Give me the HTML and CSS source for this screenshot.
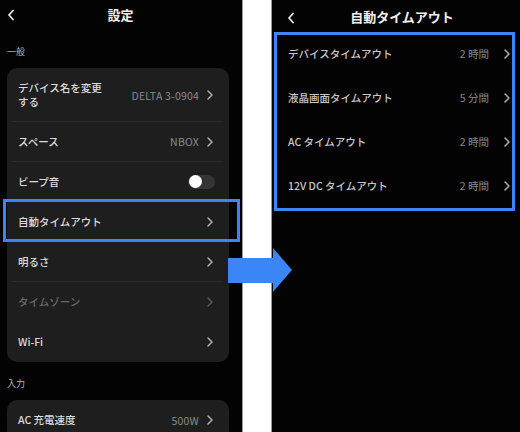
FILE: index.html
```html
<!DOCTYPE html>
<html lang="ja">
<head>
<meta charset="utf-8">
<link rel="stylesheet" href="styles.css">
</head>
<body>
<div class="stage">
  <div class="phone left">
    <header class="bar">
      <svg class="back" width="8" height="12" viewBox="0 0 8 12"><path d="M6 1.5 L2 6 L6 10.5" fill="none" stroke="#e8e8e8" stroke-width="1.8" stroke-linecap="round" stroke-linejoin="round"/></svg>
      <h1 class="title">設定</h1>
    </header>
    <div class="section-label">一般</div>
    <div class="card">
      <div class="row tall"><span class="label">デバイス名を変更<br>する</span><span class="value">DELTA 3-0904</span><svg class="chev" width="6" height="10" viewBox="0 0 6 10"><path d="M1 1 L5 5 L1 9" fill="none" stroke="#b0b0b0" stroke-width="1.5" stroke-linecap="round" stroke-linejoin="round"/></svg></div>
      <div class="row"><span class="label">スペース</span><span class="value">NBOX</span><svg class="chev" width="6" height="10" viewBox="0 0 6 10"><path d="M1 1 L5 5 L1 9" fill="none" stroke="#b0b0b0" stroke-width="1.5" stroke-linecap="round" stroke-linejoin="round"/></svg></div>
      <div class="row"><span class="label">ビープ音</span><span class="toggle"><span class="knob"></span></span></div>
      <div class="row"><span class="label">自動タイムアウト</span><svg class="chev" width="6" height="10" viewBox="0 0 6 10"><path d="M1 1 L5 5 L1 9" fill="none" stroke="#b0b0b0" stroke-width="1.5" stroke-linecap="round" stroke-linejoin="round"/></svg></div>
      <div class="row"><span class="label">明るさ</span><svg class="chev" width="6" height="10" viewBox="0 0 6 10"><path d="M1 1 L5 5 L1 9" fill="none" stroke="#b0b0b0" stroke-width="1.5" stroke-linecap="round" stroke-linejoin="round"/></svg></div>
      <div class="row dim nosep"><span class="label">タイムゾーン</span><svg class="chev" width="6" height="10" viewBox="0 0 6 10"><path d="M1 1 L5 5 L1 9" fill="none" stroke="#5a5a5a" stroke-width="1.5" stroke-linecap="round" stroke-linejoin="round"/></svg></div>
      <div class="row nosep"><span class="label">Wi-Fi</span><svg class="chev" width="6" height="10" viewBox="0 0 6 10"><path d="M1 1 L5 5 L1 9" fill="none" stroke="#b0b0b0" stroke-width="1.5" stroke-linecap="round" stroke-linejoin="round"/></svg></div>
    </div>
    <div class="section-label">入力</div>
    <div class="card">
      <div class="row nosep"><span class="label">AC 充電速度</span><span class="value">500W</span><svg class="chev" width="6" height="10" viewBox="0 0 6 10"><path d="M1 1 L5 5 L1 9" fill="none" stroke="#b0b0b0" stroke-width="1.5" stroke-linecap="round" stroke-linejoin="round"/></svg></div>
    </div>
    <div class="highlight"></div>
  </div>

  <div class="gap"></div>

  <div class="phone right">
    <header class="bar rbar">
      <svg class="back" width="8" height="12" viewBox="0 0 8 12"><path d="M6 1.5 L2 6 L6 10.5" fill="none" stroke="#e8e8e8" stroke-width="1.8" stroke-linecap="round" stroke-linejoin="round"/></svg>
      <h1 class="title">自動タイムアウト</h1>
    </header>
    <div class="timeout-list">
      <div class="trow"><span class="label">デバイスタイムアウト</span><span class="value">2 時間</span><svg class="chev" width="6" height="10" viewBox="0 0 6 10"><path d="M1 1 L5 5 L1 9" fill="none" stroke="#b0b0b0" stroke-width="1.5" stroke-linecap="round" stroke-linejoin="round"/></svg></div>
      <div class="trow"><span class="label">液晶画面タイムアウト</span><span class="value">5 分間</span><svg class="chev" width="6" height="10" viewBox="0 0 6 10"><path d="M1 1 L5 5 L1 9" fill="none" stroke="#b0b0b0" stroke-width="1.5" stroke-linecap="round" stroke-linejoin="round"/></svg></div>
      <div class="trow"><span class="label">AC タイムアウト</span><span class="value">2 時間</span><svg class="chev" width="6" height="10" viewBox="0 0 6 10"><path d="M1 1 L5 5 L1 9" fill="none" stroke="#b0b0b0" stroke-width="1.5" stroke-linecap="round" stroke-linejoin="round"/></svg></div>
      <div class="trow"><span class="label">12V DC タイムアウト</span><span class="value">2 時間</span><svg class="chev" width="6" height="10" viewBox="0 0 6 10"><path d="M1 1 L5 5 L1 9" fill="none" stroke="#b0b0b0" stroke-width="1.5" stroke-linecap="round" stroke-linejoin="round"/></svg></div>
    </div>
  </div>

  <svg class="arrow" width="70" height="50" viewBox="0 0 70 50"><polygon points="3,11 48,11 48,1 67,23 48,45 48,36 3,36" fill="#3a86f7"/></svg>
</div>
</body>
</html>
```

FILE: styles.css
```css
* { box-sizing: border-box; margin: 0; padding: 0; }
html, body { width: 520px; height: 432px; overflow: hidden; background: #fff; }
body { font-family: "Noto Sans CJK JP", "Noto Sans", sans-serif; }

.stage {
  position: relative;
  display: flex;
  width: 520px;
  height: 432px;
}

.phone {
  position: relative;
  background: #030303;
  height: 432px;
  overflow: hidden;
}
.phone.left { width: 242px; padding-left: 7px; }
.phone.right { width: 248px; padding-left: 2px; }

.gap {
  width: 30px;
  height: 432px;
  background: #fff;
  border-left: 1px solid #9a9a9a;
  border-right: 1px solid #9a9a9a;
}

.bar {
  position: relative;
  height: 30px;
  display: flex;
  align-items: center;
  justify-content: center;
}
.bar .back { position: absolute; left: 0; top: 9px; }
.rbar { height: 32px; padding-top: 2px; }
.rbar .back { left: 13px; top: 12px; }
.title {
  font-size: 13px;
  font-weight: 700;
  color: #f0f0f0;
  line-height: 16px;
}
.left .title { margin-left: -8px; }
.rbar .title { margin-left: 10px; }

.section-label {
  margin-top: 16px;
  font-size: 9px;
  line-height: 12px;
  color: #b4b4b4;
}

.card {
  width: 222px;
  margin-top: 10px;
  background: #1e1e1e;
  border-radius: 10px;
  padding: 0 6px 0 5px;
}
.card + .section-label { margin-top: 16px; }

.row {
  height: 40px;
  display: flex;
  align-items: center;
  padding: 0 10px 0 6px;
  border-bottom: 1px solid #2b2b2b;
}
.row.tall { height: 54px; padding-top: 1px; }
.row.tall .label { line-height: 14px; }
.row.nosep { border-bottom: none; }

.label {
  flex: 1;
  font-size: 10.5px;
  font-weight: 500;
  line-height: 14px;
  color: #dcdcdc;
}
.row.dim .label { color: #6a6a6a; }
.value {
  font-size: 10.5px;
  color: #8a8a8a;
  margin-right: 8px;
  letter-spacing: 0.2px;
}
.chev { display: block; flex: none; }

.toggle {
  position: relative;
  width: 27px;
  height: 14px;
  border-radius: 7px;
  background: #353535;
  margin-right: -2px;
}
.knob {
  position: absolute;
  left: 1px;
  top: 0.5px;
  width: 13px;
  height: 13px;
  border-radius: 50%;
  background: #fff;
}

.highlight {
  position: absolute;
  left: 3px;
  top: 199px;
  width: 237px;
  height: 43px;
  border: 3px solid #3a86f7;
}

.timeout-list {
  width: 241px;
  height: 179px;
  border: 3px solid #3a86f7;
}
.trow {
  height: 44px;
  display: flex;
  align-items: flex-start;
  padding: 11px 2px 0 11px;
}
.trow:last-child { height: 41px; }
.trow .label { color: #c8c8c8; line-height: 16px; }
.trow .value { font-size: 10.5px; line-height: 16px; margin-right: 15px; color: #8a8a8a; letter-spacing: 0; }
.trow .chev { margin-top: 3px; }

.arrow {
  position: absolute;
  left: 225px;
  top: 247px;
}
```
